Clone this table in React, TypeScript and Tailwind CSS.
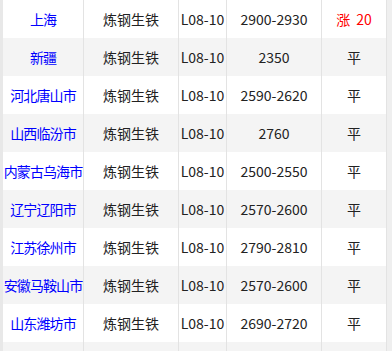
import React from "react";

const rows = [
  ["上海", "炼钢生铁", "L08-10", "2900-2930", "涨 20"],
  ["新疆", "炼钢生铁", "L08-10", "2350", "平"],
  ["河北唐山市", "炼钢生铁", "L08-10", "2590-2620", "平"],
  ["山西临汾市", "炼钢生铁", "L08-10", "2760", "平"],
  ["内蒙古乌海市", "炼钢生铁", "L08-10", "2500-2550", "平"],
  ["辽宁辽阳市", "炼钢生铁", "L08-10", "2570-2600", "平"],
  ["江苏徐州市", "炼钢生铁", "L08-10", "2790-2810", "平"],
  ["安徽马鞍山市", "炼钢生铁", "L08-10", "2570-2600", "平"],
  ["山东潍坊市", "炼钢生铁", "L08-10", "2690-2720", "平"],
  ["", "", "", "", ""],
];

export default function App() {
  return (
    <div
      className="w-[392px] h-[351px] overflow-hidden bg-[#efefef] text-[14px]"
      style={{ fontFamily: '"Noto Sans CJK SC", "Noto Sans", sans-serif' }}
    >
      <div className="w-[387px] border-l-[3px] border-[#e8e8e8] bg-white">
        {rows.map((r, i) => (
          <div
            key={i}
            className={`grid grid-cols-[81px_95px_48px_95px_65px] h-[38px] ${
              i % 2 === 1 ? "bg-[#f4f4f4]" : "bg-white"
            }`}
          >
            <div className="flex items-center justify-center border-r border-[#e3e3e3] text-[#0000ff] whitespace-nowrap tracking-[-0.9px]">
              {r[0]}
            </div>
            <div className="flex items-center justify-center border-r border-[#e3e3e3] text-[#222] whitespace-nowrap">
              {r[1]}
            </div>
            <div className="flex items-center justify-center border-r border-[#e3e3e3] text-[#222] whitespace-nowrap">
              {r[2]}
            </div>
            <div className="flex items-center justify-center border-r border-[#e3e3e3] text-[#222] whitespace-nowrap">
              {r[3]}
            </div>
            <div
              className={`flex items-center justify-center border-r border-[#e3e3e3] whitespace-nowrap ${
                i === 0 ? "text-[#ff0000]" : "text-[#222]"
              }`}
            >
              {i === 0 ? (
                <span>
                  涨<span className="inline-block w-[6px]" />20
                </span>
              ) : (
                r[4]
              )}
            </div>
          </div>
        ))}
      </div>
    </div>
  );
}
